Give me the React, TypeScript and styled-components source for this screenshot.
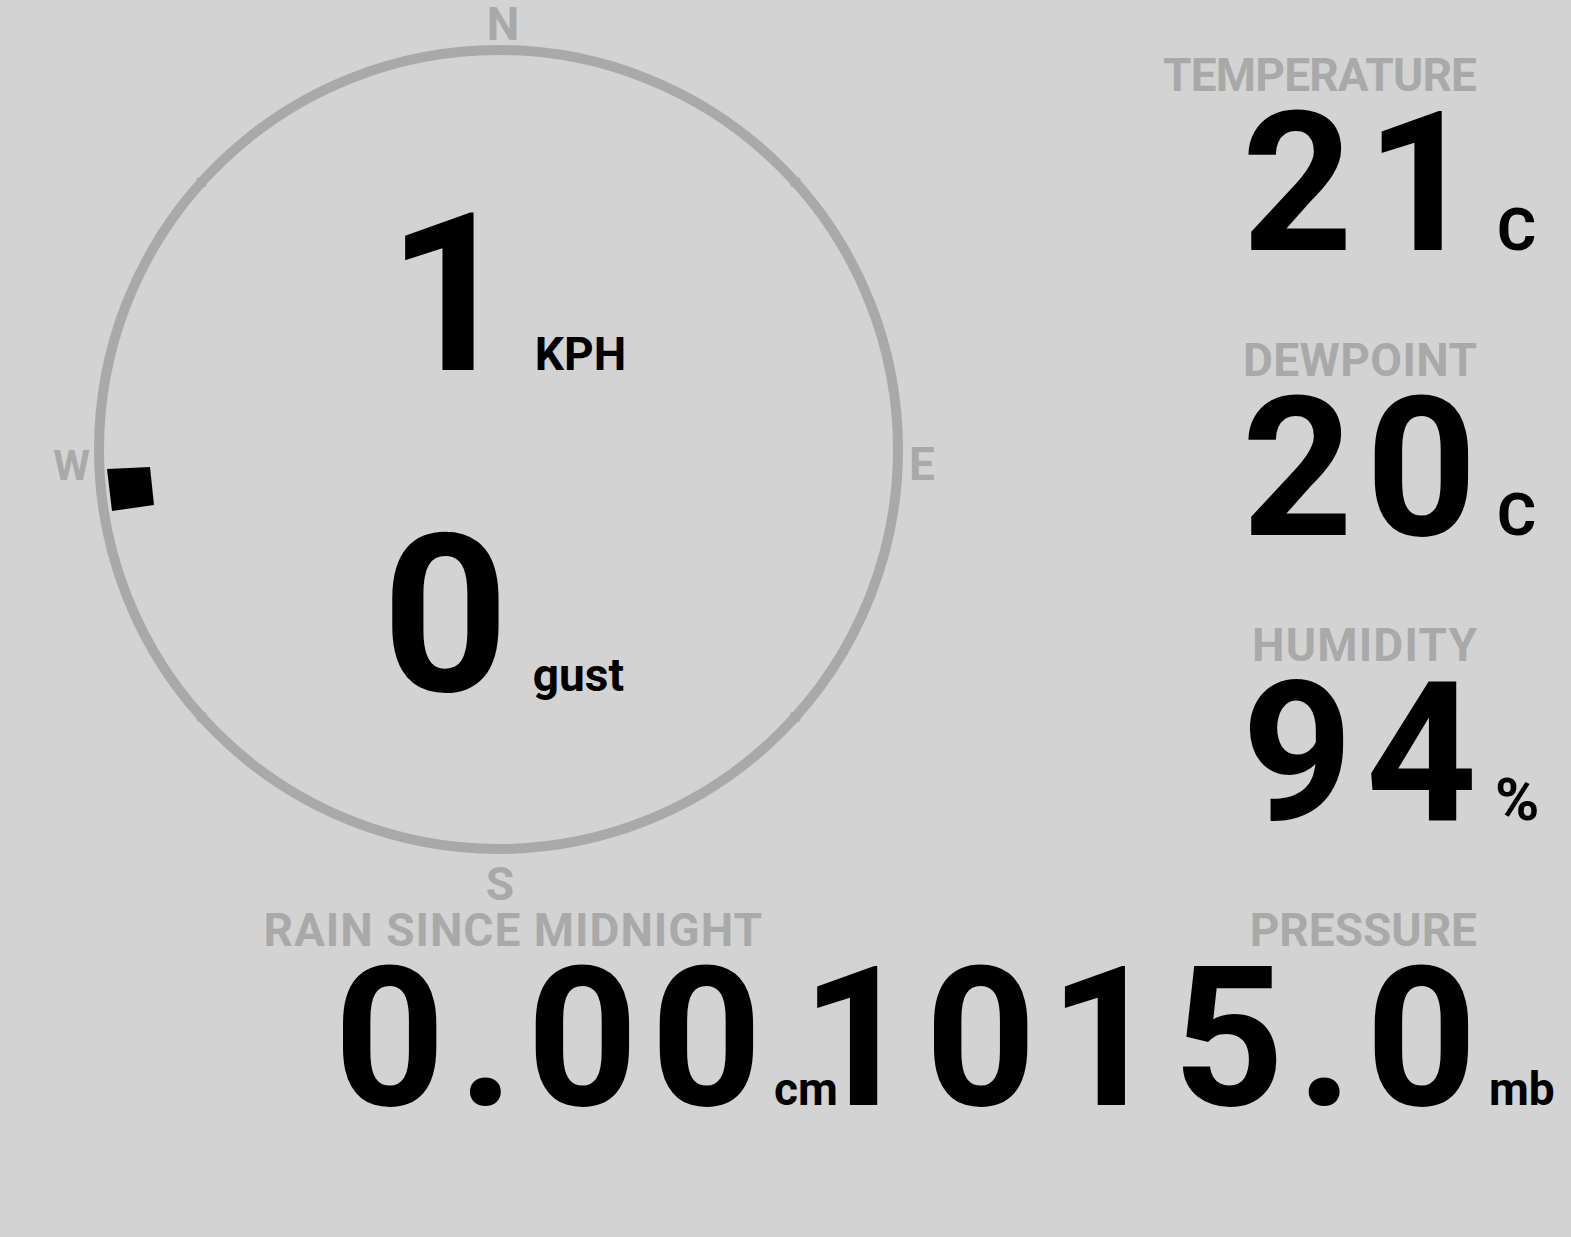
import React from "react";
import styled, { createGlobalStyle } from "styled-components";

const GlobalStyle = createGlobalStyle`
  html, body {
    margin: 0;
    padding: 0;
    background: #d3d3d3;
  }
  body {
    font-family: Roboto, "Liberation Sans", Arial, sans-serif;
    overflow: hidden;
  }
`;

const MUTED = "#a9a9a9";

const Page = styled.main`
  width: 1571px;
  height: 1237px;
  display: grid;
  grid-template-columns: 856px 1fr;
  grid-template-rows: 840px auto;
  row-gap: 67px;
  align-items: start;
  background: #d3d3d3;
  color: #000;
  font-weight: 700;
  overflow: hidden;
`;

const Compass = styled.section`
  position: relative;
  width: 856px;
  height: 905px;
  grid-column: 1;
  grid-row: 1;
`;

const Dial = styled.svg`
  position: absolute;
  top: 0;
  left: 0;
  width: 940px;
  height: 905px;
  overflow: visible;
  pointer-events: none;
`;

const DialLabel = styled.text<{ $size?: number }>`
  font-family: Roboto, "Liberation Sans", Arial, sans-serif;
  font-weight: 700;
  font-size: ${(p) => p.$size ?? 46}px;
  fill: ${MUTED};
`;

const Readouts = styled.div`
  position: relative;
  display: flex;
  flex-direction: column;
  gap: 141px;
  padding-top: 205px;
`;

const SpeedRow = styled.div<{ $indent: number; $gap: number }>`
  display: flex;
  align-items: baseline;
  padding-left: ${(p) => p.$indent}px;
  gap: ${(p) => p.$gap}px;
  height: 180px;
`;

const SpeedValue = styled.span`
  font-size: 221px;
  line-height: 180px;
`;

const SpeedUnit = styled.span`
  font-size: 46px;
  line-height: 1;
`;

const RightStack = styled.div`
  grid-column: 2;
  grid-row: 1;
  display: flex;
  flex-direction: column;
  gap: 67px;
  padding-top: 52px;
`;

const Stat = styled.div<{ $col?: number; $row?: number }>`
  display: grid;
  grid-template-columns: minmax(0, 1fr) 82px;
  column-gap: 12px;
  ${(p) => (p.$col ? `grid-column: ${p.$col};` : "")}
  ${(p) => (p.$row ? `grid-row: ${p.$row};` : "")}
`;

const Label = styled.div<{ $tracking: number }>`
  grid-column: 1;
  grid-row: 1;
  display: flex;
  justify-content: flex-end;
  font-size: 46px;
  line-height: 46px;
  letter-spacing: ${(p) => p.$tracking}px;
  color: ${MUTED};
  white-space: nowrap;
`;

const LabelText = styled.span<{ $tracking: number }>`
  margin-right: ${(p) => -p.$tracking}px;
`;

const Value = styled.div`
  grid-column: 1;
  grid-row: 2;
  align-self: baseline;
  display: flex;
  justify-content: flex-end;
  font-size: 194px;
  line-height: 172px;
  letter-spacing: 0.065em;
  white-space: nowrap;
`;

const ValueText = styled.span`
  margin-right: -0.065em;
`;

const Unit = styled.div<{ $size: number; $inset: number }>`
  grid-column: 2;
  grid-row: 2;
  align-self: baseline;
  padding-left: ${(p) => p.$inset}px;
  font-size: ${(p) => p.$size}px;
  line-height: 1;
  white-space: nowrap;
`;

type StatProps = {
  label: string;
  value: string;
  unit: string;
  unitSize?: number;
  unitInset?: number;
  tracking?: number;
  col?: number;
  row?: number;
};

function StatBlock({
  label,
  value,
  unit,
  unitSize = 46,
  unitInset = 0,
  tracking = 0,
  col,
  row,
}: StatProps) {
  return (
    <Stat $col={col} $row={row}>
      <Label $tracking={tracking}>
        <LabelText $tracking={tracking}>{label}</LabelText>
      </Label>
      <Value>
        <ValueText>{value}</ValueText>
      </Value>
      <Unit $size={unitSize} $inset={unitInset}>
        {unit}
      </Unit>
    </Stat>
  );
}

const CX = 498.5;
const CY = 449.5;
const R = 399.5;

function tick(angleDeg: number) {
  const a = (angleDeg * Math.PI) / 180;
  const x1 = CX + Math.cos(a) * (R - 6);
  const y1 = CY + Math.sin(a) * (R - 6);
  const x2 = CX + Math.cos(a) * (R + 6);
  const y2 = CY + Math.sin(a) * (R + 6);
  return { x1, y1, x2, y2 };
}

export default function App() {
  return (
    <>
      <GlobalStyle />
      <Page>
        <Compass>
          <Dial viewBox="0 0 940 905">
            <circle cx={CX} cy={CY} r={R} fill="none" stroke={MUTED} strokeWidth={10} />
            {[-42, -138, 42, 138].map((d) => {
              const t = tick(d);
              return <line key={d} {...t} stroke={MUTED} strokeWidth={3} />;
            })}
            <DialLabel x={503} y={40} textAnchor="middle">N</DialLabel>
            <DialLabel x={909} y={480}>E</DialLabel>
            <DialLabel x={500} y={900} textAnchor="middle">S</DialLabel>
            <DialLabel x={90} y={480} textAnchor="end" $size={42}>W</DialLabel>
            <polygon points="107,469 150,467 154,505 112,511" fill="#000" />
          </Dial>
          <Readouts>
            <SpeedRow $indent={387} $gap={21}>
              <SpeedValue>1</SpeedValue>
              <SpeedUnit>KPH</SpeedUnit>
            </SpeedRow>
            <SpeedRow $indent={382} $gap={24}>
              <SpeedValue>0</SpeedValue>
              <SpeedUnit>gust</SpeedUnit>
            </SpeedRow>
          </Readouts>
        </Compass>

        <RightStack>
          <StatBlock label="TEMPERATURE" value="21" unit="C" unitSize={60} unitInset={8} tracking={-0.8} />
          <StatBlock label="DEWPOINT" value="20" unit="C" unitSize={60} unitInset={8} tracking={0.4} />
          <StatBlock label="HUMIDITY" value="94" unit="%" unitSize={60} unitInset={6} tracking={1.2} />
        </RightStack>

        <StatBlock label="RAIN SINCE MIDNIGHT" value="0.00" unit="cm" tracking={1} col={1} row={2} />
        <StatBlock label="PRESSURE" value="1015.0" unit="mb" col={2} row={2} />
      </Page>
    </>
  );
}
